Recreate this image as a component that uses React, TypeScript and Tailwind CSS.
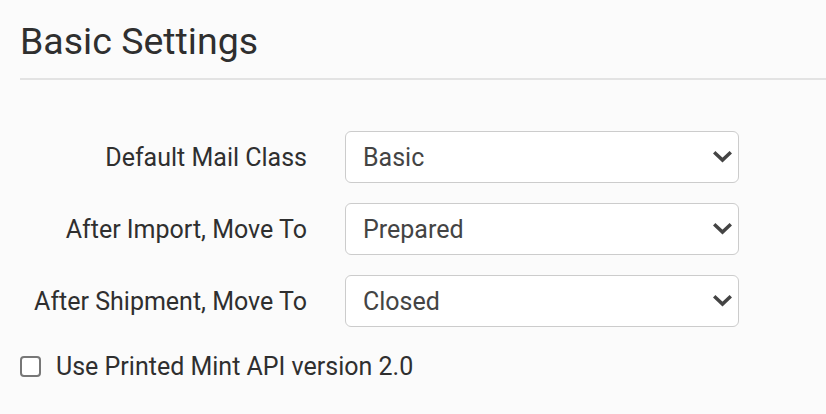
import { useState } from "react";

const rows = [
  { label: "Default Mail Class", value: "Basic", options: ["Basic", "Priority", "Express"] },
  { label: "After Import, Move To", value: "Prepared", options: ["Prepared", "Awaiting", "Closed"] },
  { label: "After Shipment, Move To", value: "Closed", options: ["Closed", "Prepared", "Shipped"] },
];

function Chevron() {
  return (
    <svg width="19" height="12" viewBox="0 0 19 12" className="pointer-events-none absolute right-[7px] top-1/2 -translate-y-1/2">
      <path d="M2.5 2.5 L9.5 9 L16.5 2.5" fill="none" stroke="#444" strokeWidth="3.5" strokeLinecap="square" />
    </svg>
  );
}

export default function App() {
  const [useV2, setUseV2] = useState(false);

  return (
    <div className="min-h-[414px] w-[826px] bg-[#fbfbfb] font-['Roboto',sans-serif] text-[#2f2f2f]">
      <div className="pl-5">
        <h1 className="border-b-2 border-[#e3e3e3] pt-[19px] pb-[15px] text-[37.5px] leading-[44px] font-normal">
          Basic Settings
        </h1>

        <div className="mt-[51px] flex flex-col gap-5">
          {rows.map((row) => (
            <div key={row.label} className="flex items-center">
              <label className="w-[287px] pt-[2px] text-right text-[25px]">{row.label}</label>
              <div className="relative ml-[38px] w-[394px]">
                <select
                  defaultValue={row.value}
                  aria-label={row.label}
                  className="h-[52px] w-full appearance-none rounded-md border border-[#cccccc] bg-white pt-[2px] pl-[17px] text-[25px] text-[#444]"
                >
                  {row.options.map((o) => (
                    <option key={o}>{o}</option>
                  ))}
                </select>
                <Chevron />
              </div>
            </div>
          ))}
        </div>

        <label className="mt-[21px] flex items-center gap-[15px]">
          <input
            type="checkbox"
            checked={useV2}
            onChange={(e) => setUseV2(e.target.checked)}
            className="h-[21px] w-[21px] appearance-none rounded border-2 border-[#777] bg-white"
          />
          <span className="text-[25px]">Use Printed Mint API version 2.0</span>
        </label>
      </div>
    </div>
  );
}
